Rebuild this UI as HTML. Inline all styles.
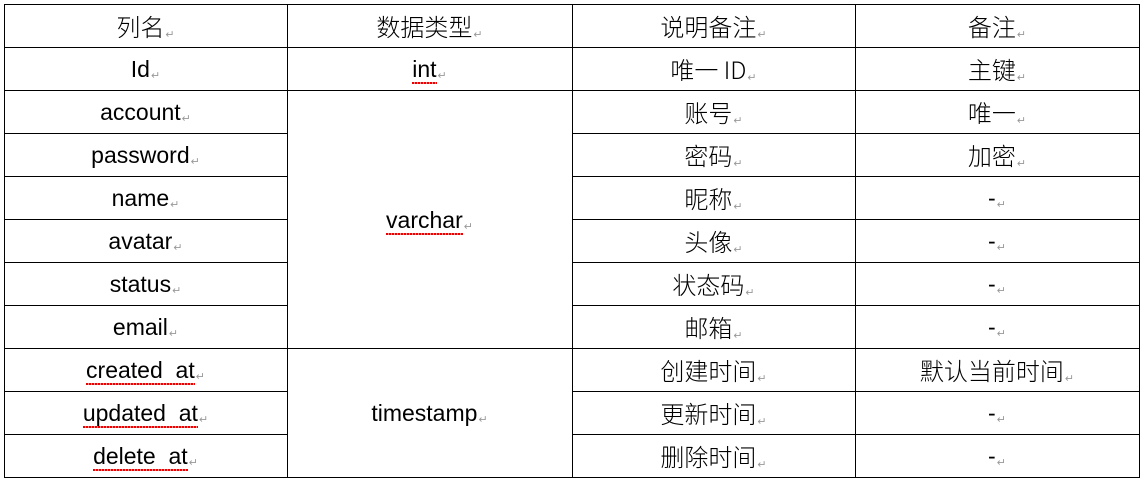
<!DOCTYPE html>
<html><head><meta charset="utf-8"><style>
body{margin:0;width:1145px;height:482px;background:#fff;position:relative;overflow:hidden;font-family:"Liberation Sans","Noto Sans CJK SC",sans-serif;}
.h{position:absolute;height:1px;background:#000}
.v{position:absolute;width:1px;background:#000}
.t{position:absolute;height:43px;line-height:45px;text-align:center;font-size:23px;color:#000;white-space:nowrap}
.c{font-family:"Noto Sans CJK SC","WenQuanYi Zen Hei",sans-serif;font-weight:300;font-size:24px;line-height:43px}
.m{color:#999;font-size:11px;vertical-align:-2px;margin-left:1px}
.w{display:inline-block;line-height:26px;padding-bottom:2px;background:repeating-linear-gradient(90deg,#e00 0 2px,#f88 2px 3px) no-repeat left bottom/100% 2px}
</style></head><body>
<div class="h" style="left:4px;top:4px;width:1136px"></div>
<div class="h" style="left:4px;top:47px;width:1136px"></div>
<div class="h" style="left:4px;top:90px;width:1136px"></div>
<div class="h" style="left:4px;top:133px;width:283px"></div><div class="h" style="left:572px;top:133px;width:568px"></div>
<div class="h" style="left:4px;top:176px;width:283px"></div><div class="h" style="left:572px;top:176px;width:568px"></div>
<div class="h" style="left:4px;top:219px;width:283px"></div><div class="h" style="left:572px;top:219px;width:568px"></div>
<div class="h" style="left:4px;top:262px;width:283px"></div><div class="h" style="left:572px;top:262px;width:568px"></div>
<div class="h" style="left:4px;top:305px;width:283px"></div><div class="h" style="left:572px;top:305px;width:568px"></div>
<div class="h" style="left:4px;top:348px;width:1136px"></div>
<div class="h" style="left:4px;top:391px;width:283px"></div><div class="h" style="left:572px;top:391px;width:568px"></div>
<div class="h" style="left:4px;top:434px;width:283px"></div><div class="h" style="left:572px;top:434px;width:568px"></div>
<div class="h" style="left:4px;top:477px;width:1136px"></div>
<div class="v" style="left:4px;top:4px;height:474px"></div>
<div class="v" style="left:287px;top:4px;height:474px"></div>
<div class="v" style="left:572px;top:4px;height:474px"></div>
<div class="v" style="left:855px;top:4px;height:474px"></div>
<div class="v" style="left:1139px;top:4px;height:474px"></div>

<div class="t c" style="left:4px;top:4px;width:283px">列名<span class="m">↵</span></div>
<div class="t c" style="left:287px;top:4px;width:285px">数据类型<span class="m">↵</span></div>
<div class="t c" style="left:572px;top:4px;width:283px">说明备注<span class="m">↵</span></div>
<div class="t c" style="left:855px;top:4px;width:284px">备注<span class="m">↵</span></div>

<div class="t" style="left:4px;top:47px;width:283px">Id<span class="m">↵</span></div>
<div class="t" style="left:287px;top:47px;width:285px"><span class="w">int</span><span class="m">↵</span></div>
<div class="t c" style="left:572px;top:47px;width:283px">唯一 ID<span class="m">↵</span></div>
<div class="t c" style="left:855px;top:47px;width:284px">主键<span class="m">↵</span></div>

<div class="t" style="left:4px;top:90px;width:283px">account<span class="m">↵</span></div>
<div class="t" style="left:4px;top:133px;width:283px">password<span class="m">↵</span></div>
<div class="t" style="left:4px;top:176px;width:283px">name<span class="m">↵</span></div>
<div class="t" style="left:4px;top:219px;width:283px">avatar<span class="m">↵</span></div>
<div class="t" style="left:4px;top:262px;width:283px">status<span class="m">↵</span></div>
<div class="t" style="left:4px;top:305px;width:283px">email<span class="m">↵</span></div>
<div class="t" style="left:4px;top:348px;width:283px"><span class="w">created&nbsp; at</span><span class="m">↵</span></div>
<div class="t" style="left:4px;top:391px;width:283px"><span class="w">updated&nbsp; at</span><span class="m">↵</span></div>
<div class="t" style="left:4px;top:434px;width:283px"><span class="w">delete&nbsp; at</span><span class="m">↵</span></div>

<div class="t" style="left:287px;top:198px;width:285px"><span class="w">varchar</span><span class="m">↵</span></div>
<div class="t" style="left:287px;top:391px;width:285px">timestamp<span class="m">↵</span></div>

<div class="t c" style="left:572px;top:90px;width:283px">账号<span class="m">↵</span></div>
<div class="t c" style="left:572px;top:133px;width:283px">密码<span class="m">↵</span></div>
<div class="t c" style="left:572px;top:176px;width:283px">昵称<span class="m">↵</span></div>
<div class="t c" style="left:572px;top:219px;width:283px">头像<span class="m">↵</span></div>
<div class="t c" style="left:572px;top:262px;width:283px">状态码<span class="m">↵</span></div>
<div class="t c" style="left:572px;top:305px;width:283px">邮箱<span class="m">↵</span></div>
<div class="t c" style="left:572px;top:348px;width:283px">创建时间<span class="m">↵</span></div>
<div class="t c" style="left:572px;top:391px;width:283px">更新时间<span class="m">↵</span></div>
<div class="t c" style="left:572px;top:434px;width:283px">删除时间<span class="m">↵</span></div>

<div class="t c" style="left:855px;top:90px;width:284px">唯一<span class="m">↵</span></div>
<div class="t c" style="left:855px;top:133px;width:284px">加密<span class="m">↵</span></div>
<div class="t" style="left:855px;top:176px;width:284px">-<span class="m">↵</span></div>
<div class="t" style="left:855px;top:219px;width:284px">-<span class="m">↵</span></div>
<div class="t" style="left:855px;top:262px;width:284px">-<span class="m">↵</span></div>
<div class="t" style="left:855px;top:305px;width:284px">-<span class="m">↵</span></div>
<div class="t c" style="left:855px;top:348px;width:284px">默认当前时间<span class="m">↵</span></div>
<div class="t" style="left:855px;top:391px;width:284px">-<span class="m">↵</span></div>
<div class="t" style="left:855px;top:434px;width:284px">-<span class="m">↵</span></div>
</body></html>
